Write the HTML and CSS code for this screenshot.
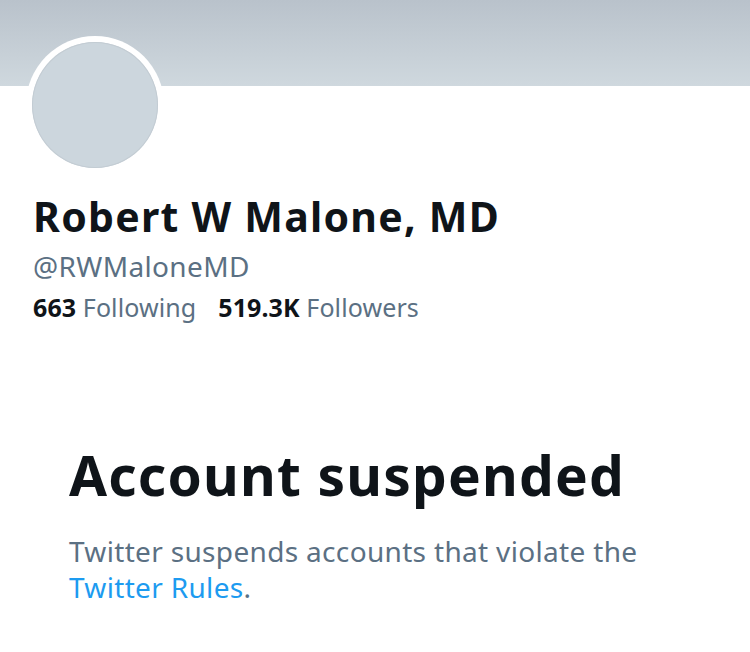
FILE: index.html
```html
<!DOCTYPE html>
<html lang="en">
<head>
<meta charset="utf-8">
<title>Robert W Malone, MD</title>
<link rel="stylesheet" href="styles.css">
</head>
<body>
<div class="page">
  <div class="banner"></div>
  <div class="profile">
    <div class="avatar"><div class="avatar-inner"></div></div>
    <h1 class="name">Robert W Malone, MD</h1>
    <div class="handle">@RWMaloneMD</div>
    <div class="stats">
      <span class="stat"><b>663</b> Following</span>
      <span class="stat"><b>519.3K</b> Followers</span>
    </div>
  </div>
  <div class="notice">
    <h2 class="notice-title">Account suspended</h2>
    <p class="notice-text">Twitter suspends accounts that violate the <a class="link" href="#">Twitter Rules</a>.</p>
  </div>
</div>
</body>
</html>
```

FILE: styles.css
```css
html, body {
  margin: 0;
  padding: 0;
  background: #ffffff;
}
body {
  font-family: "Noto Sans", "Liberation Sans", Arial, sans-serif;
  color: #0f1419;
}
.page {
  width: 750px;
  height: 652px;
  overflow: hidden;
}
.banner {
  height: 86px;
  background: linear-gradient(180deg, #b9c2cb 0%, #cfd8de 100%);
}
.profile {
  padding-left: 33px;
}
.avatar {
  width: 138px;
  height: 138px;
  border-radius: 50%;
  background: #ffffff;
  margin-top: -50px;
  margin-left: -7px;
  display: flex;
  align-items: center;
  justify-content: center;
}
.avatar-inner {
  width: 126px;
  height: 126px;
  border-radius: 50%;
  background: #ccd6dd;
  box-shadow: inset 0 0 0 1px #c3ccd3;
}
.name {
  margin: 18px 0 0 0;
  font-size: 41px;
  line-height: 48px;
  font-weight: 700;
  letter-spacing: 1.25px;
}
.handle {
  margin-top: 9px;
  font-size: 28px;
  line-height: 34px;
  color: #5b7083;
  letter-spacing: 0.35px;
}
.stats {
  margin-top: 9px;
  font-size: 25px;
  line-height: 30px;
  color: #5b7083;
  display: flex;
  gap: 22px;
  letter-spacing: 0.1px;
}
.stat b {
  color: #0f1419;
  font-weight: 700;
}
.notice {
  padding-left: 69px;
  margin-top: 121px;
}
.notice-title {
  margin: 0;
  font-size: 55px;
  line-height: 64px;
  font-weight: 700;
  letter-spacing: 1.2px;
}
.notice-text {
  margin: 26px 0 0 0;
  width: 610px;
  font-size: 28px;
  line-height: 36px;
  color: #5b7083;
  letter-spacing: 0.33px;
}
.link {
  color: #1d9bf0;
  text-decoration: none;
}
```
